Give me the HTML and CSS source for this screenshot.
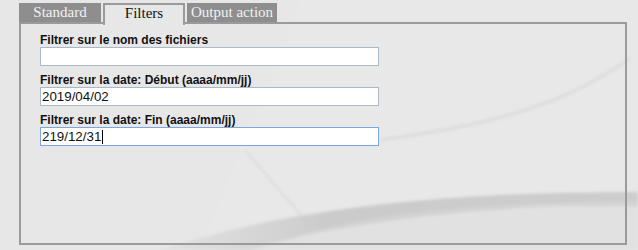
FILE: index.html
```html
<!DOCTYPE html>
<html lang="fr">
<head>
    <meta charset="UTF-8">
    <title>Filters</title>
    <link rel="stylesheet" href="styles.css">
</head>
<body>
    <svg class="backdrop" width="638" height="250" viewBox="0 0 638 250">
        <defs>
            <linearGradient id="band" x1="0" y1="0" x2="1" y2="0">
                <stop offset="0" stop-color="#d2d2d2" stop-opacity="0.3"/>
                <stop offset="0.35" stop-color="#cbcbcb"/>
                <stop offset="1" stop-color="#cdcdcd"/>
            </linearGradient>
            <filter id="soft" x="-5%" y="-20%" width="110%" height="140%">
                <feGaussianBlur stdDeviation="1.5"/>
            </filter>
        </defs>
        <path d="M300 0 L640 0 L640 250 L200 250 Z" fill="#e9e9ea" opacity="0.5"/>
        <path d="M245 150 L312 228" stroke="#dcdcdc" stroke-width="2" fill="none" filter="url(#soft)"/>
        <path d="M380 140 C470 128 560 110 630 58" stroke="#d9d9d9" stroke-width="3" fill="none" opacity="0.8" filter="url(#soft)"/>
        <g filter="url(#soft)">
            <path d="M160 250 C290 208 440 192 638 192 L638 206 C480 204 340 222 250 250 Z" fill="url(#band)"/>
            <path d="M300 236 C380 214 480 204 638 203" stroke="#d8d8d8" stroke-width="2" fill="none"/>
            <path d="M250 250 C340 222 480 206 638 206 L638 250 Z" fill="#dadada" opacity="0.55"/>
        </g>
    </svg>

    <div class="page">
        <div class="tabs">
            <div class="tab">Standard</div>
            <div class="tab active">Filters</div>
            <div class="tab">Output action</div>
        </div>

        <div class="panel">
            <div class="form-group">
                <label for="f-name">Filtrer sur le nom des fichiers</label>
                <input type="text" id="f-name">
            </div>

            <div class="form-group">
                <label for="f-start">Filtrer sur la date: Début (aaaa/mm/jj)</label>
                <input type="text" id="f-start" value="2019/04/02">
            </div>

            <div class="form-group">
                <label for="f-end">Filtrer sur la date: Fin (aaaa/mm/jj)</label>
                <div class="field">
                    <input type="text" id="f-end" class="focused" value="219/12/31">
                    <span class="caret"></span>
                </div>
            </div>
        </div>
    </div>
</body>
</html>
```

FILE: styles.css
```css
* {
    box-sizing: border-box;
    margin: 0;
    padding: 0;
}

body {
    background: #e7e7e8;
    font-family: 'Liberation Sans', Arial, sans-serif;
    width: 638px;
    height: 250px;
    overflow: hidden;
    position: relative;
}

.backdrop {
    position: absolute;
    top: 0;
    left: 0;
    z-index: 0;
}

.page {
    position: relative;
    z-index: 1;
    padding: 3px 0 0 19px;
}

.tabs {
    display: flex;
    gap: 2px;
    height: 19px;
}

.tab {
    min-width: 82px;
    padding: 0 4px;
    height: 19px;
    line-height: 19px;
    text-align: center;
    font-family: 'Liberation Serif', 'Times New Roman', serif;
    font-size: 15px;
    background: #8e8e8e;
    color: #f2f2f2;
}

.tab.active {
    background: #e7e7e8;
    color: #111;
    height: 22px;
    line-height: 17px;
    border: 2px solid #9b9b9b;
    border-bottom: none;
    position: relative;
    z-index: 2;
}

.panel {
    width: 608px;
    height: 223px;
    border: 2px solid #9b9b9b;
    padding: 10px 0 0 19px;
}

.form-group {
    margin-bottom: 8px;
}

.form-group label {
    display: block;
    font-size: 12px;
    font-weight: bold;
    line-height: 13px;
    color: #111;
}

.form-group input {
    display: block;
    width: 339px;
    height: 19px;
    border: 1px solid #a9b9cc;
    background: #fff;
    padding: 0 1px;
    font-family: 'Liberation Sans', Arial, sans-serif;
    font-size: 13.33px;
    color: #111;
    outline: none;
}

.form-group input.focused {
    border-color: #7ba6e2;
}

.field {
    position: relative;
}

.caret {
    position: absolute;
    left: 62px;
    top: 3px;
    width: 1px;
    height: 14px;
    background: #000;
}
```
